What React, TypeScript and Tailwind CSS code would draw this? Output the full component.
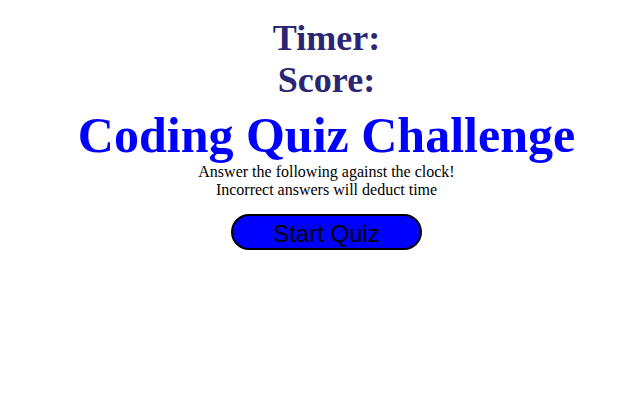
export default function App() {
  return (
    <div className="flex flex-col items-center pl-[26px] pt-[17px] text-center font-['Liberation_Serif',serif]">
      <div className="text-[36px] font-bold leading-[42px] text-[#2a2673]">Timer:</div>
      <div className="text-[36px] font-bold leading-[42px] text-[#2a2673]">Score:</div>
      <h1 className="mt-[6px] text-[50px] font-bold leading-[56px] text-[#0000ff]">Coding Quiz Challenge</h1>
      <p className="text-[16px] leading-[18px] text-black">Answer the following against the clock!</p>
      <p className="text-[16px] leading-[18px] text-black">Incorrect answers will deduct time</p>
      <button className="mt-[15px] h-[36px] w-[191px] rounded-full border-2 border-black bg-[#0000ff] font-['Liberation_Sans',sans-serif] text-[24px] text-black">
        Start Quiz
      </button>
    </div>
  );
}
